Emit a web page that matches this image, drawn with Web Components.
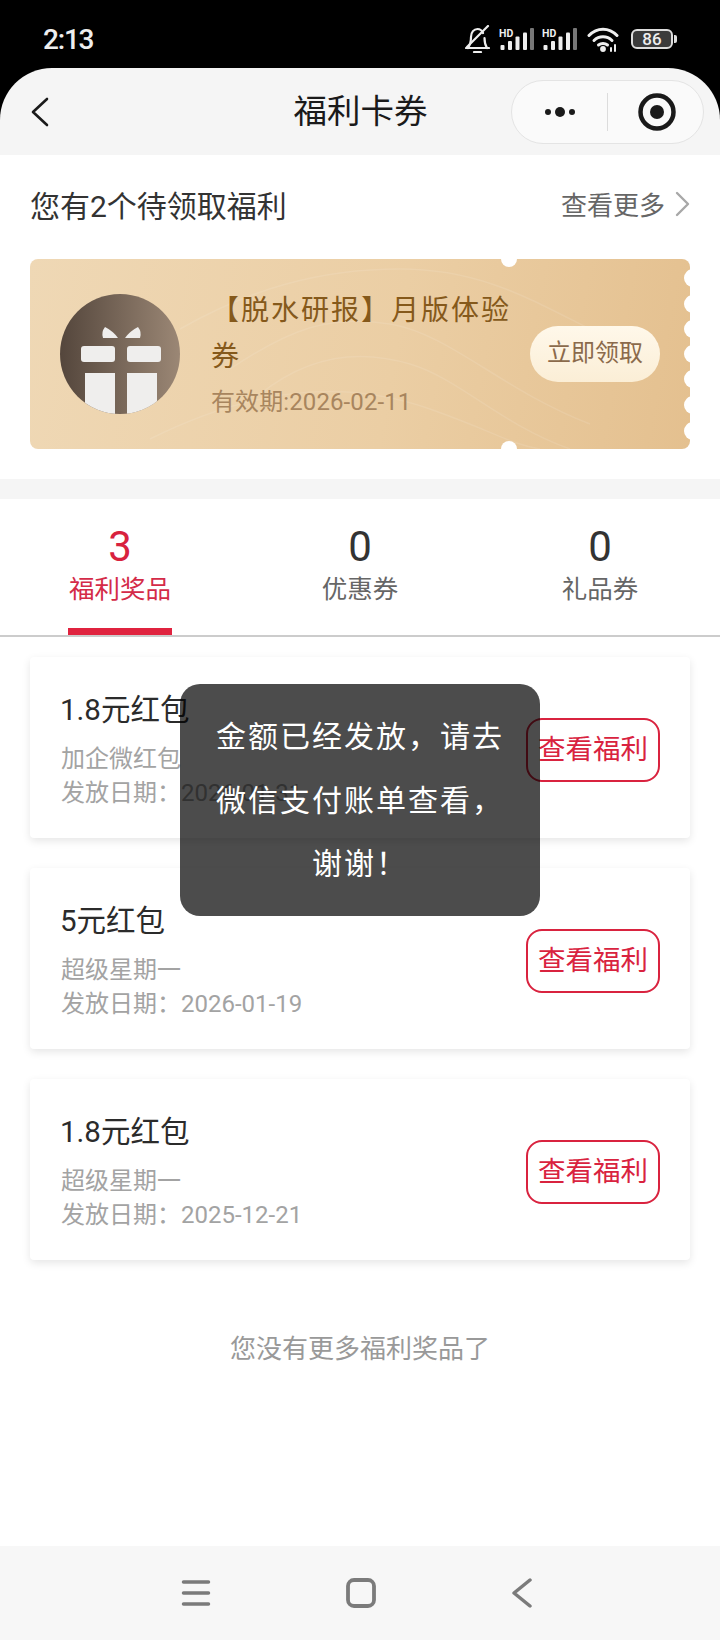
<!DOCTYPE html>
<html lang="zh">
<head>
<meta charset="utf-8">
<title>福利卡券</title>
<style>
  html, body { margin: 0; padding: 0; background: #000; }
  body {
    width: 720px;
    height: 1640px;
    overflow: hidden;
    font-family: Roboto, "Noto Sans CJK SC", sans-serif;
  }
</style>
</head>
<body>
<welfare-page>
  <status-bar slot="status" time="2:13" battery="86"></status-bar>
  <nav-bar slot="nav" title="福利卡券"></nav-bar>
  <pending-section slot="pending" heading="您有2个待领取福利" more="查看更多">
    <coupon-ticket name="【脱水研报】月版体验券" expire="有效期:2026-02-11" action="立即领取"></coupon-ticket>
  </pending-section>
  <tab-bar slot="tabs">
    <tab-item count="3" label="福利奖品" active></tab-item>
    <tab-item count="0" label="优惠券"></tab-item>
    <tab-item count="0" label="礼品券"></tab-item>
  </tab-bar>
  <prize-list slot="list" end="您没有更多福利奖品了">
    <prize-card name="1.8元红包" source="加企微红包" date="发放日期：2026-01-31" action="查看福利"></prize-card>
    <prize-card name="5元红包" source="超级星期一" date="发放日期：2026-01-19" action="查看福利"></prize-card>
    <prize-card name="1.8元红包" source="超级星期一" date="发放日期：2025-12-21" action="查看福利"></prize-card>
  </prize-list>
  <system-nav slot="system"></system-nav>
  <toast-message slot="toast">金额已经发放，请去微信支付账单查看，谢谢！</toast-message>
</welfare-page>

<script>
/** Page shell: stacks the screen sections and holds the toast overlay. */
class WelfarePage extends HTMLElement {
  constructor() {
    super();
    this.attachShadow({ mode: 'open' });
  }

  connectedCallback() {
    this.shadowRoot.innerHTML = `
      <style>
        :host {
          display: flex;
          flex-direction: column;
          position: relative;
          width: 720px;
          height: 1640px;
          background: #000;
        }
        .content {
          flex: 1;
          display: flex;
          flex-direction: column;
          background: #fff;
        }
      </style>
      <slot name="status"></slot>
      <slot name="nav"></slot>
      <div class="content">
        <slot name="pending"></slot>
        <slot name="tabs"></slot>
        <slot name="list"></slot>
      </div>
      <slot name="system"></slot>
      <slot name="toast"></slot>
    `;
  }
}

/** Phone status bar: clock on the left, state icons on the right. */
class StatusBar extends HTMLElement {
  constructor() {
    super();
    this.attachShadow({ mode: 'open' });
  }

  _signal() {
    return `
      <svg class="signal" width="35" height="22" viewBox="0 0 35 22">
        <text x="0" y="9" font-family="Roboto, sans-serif" font-size="10.5" font-weight="700" fill="#eee">HD</text>
        <rect x="1.5" y="17" width="4" height="5" rx="1" fill="#eee"/>
        <rect x="9" y="13" width="4" height="9" rx="1" fill="#eee"/>
        <rect x="16.5" y="8.5" width="4" height="13.5" rx="1" fill="#eee"/>
        <rect x="24" y="4.5" width="4" height="17.5" rx="1" fill="#eee"/>
        <rect x="31" y="0" width="4" height="22" rx="1" fill="#777"/>
      </svg>`;
  }

  connectedCallback() {
    this.shadowRoot.innerHTML = `
      <style>
        :host {
          display: flex;
          align-items: center;
          justify-content: space-between;
          box-sizing: border-box;
          height: 68px;
          padding: 10px 43px 0 43px;
          background: #000;
          color: #eee;
        }
        .time {
          font: 500 28px Roboto, sans-serif;
          letter-spacing: -1.2px;
        }
        .icons {
          display: flex;
          align-items: center;
        }
        .bell { margin-right: 9px; }
        .signal + .signal { margin-left: 8px; }
        .wifi { margin-left: 10px; margin-right: 12px; }
        .battery {
          display: flex;
          align-items: center;
          justify-content: center;
          box-sizing: border-box;
          width: 42px;
          height: 20px;
          border: 2px solid #ddd;
          border-radius: 6px;
          background: #3b3b3b;
          font: 500 17px/16px Roboto, sans-serif;
          color: #eee;
        }
        .tip {
          width: 3px;
          height: 8px;
          margin-left: 1px;
          border-radius: 0 2px 2px 0;
          background: #ddd;
        }
      </style>
      <span class="time">${this.getAttribute('time')}</span>
      <div class="icons">
        <svg class="bell" width="25" height="28" viewBox="0 0 25 28" fill="none" stroke="#eee" stroke-width="2.2" stroke-linecap="round" stroke-linejoin="round">
          <path d="M1 23h23M3 23c2-3 3-6 3-11 0-5 3-8 6.500-8 2.500 0 4.500 1.500 5.500 4M19.500 13c0 4 .5 7 2.500 10"/>
          <path d="M23 1 2 22"/>
          <path d="M9 27h7"/>
        </svg>
        ${this._signal()}
        ${this._signal()}
        <svg class="wifi" width="32" height="25" viewBox="0 0 32 25" fill="none" stroke="#eee" stroke-width="3" stroke-linecap="round">
          <path d="M2 8.500C10-0 22-0 30 8.500"/>
          <path d="M7 13.500C12 8.500 20 8.500 25 13.500"/>
          <path d="M11.500 18c2.500-2 6.500-2 9 0"/>
          <circle cx="16" cy="22" r="1.400" fill="#eee"/>
          <path d="M24 24v-3M28 24v-6" stroke-width="2"/>
        </svg>
        <span class="battery">${this.getAttribute('battery')}</span>
        <span class="tip"></span>
      </div>
    `;
  }
}

/** Mini program title bar with back arrow and capsule buttons. */
class NavBar extends HTMLElement {
  constructor() {
    super();
    this.attachShadow({ mode: 'open' });
  }

  connectedCallback() {
    this.shadowRoot.innerHTML = `
      <style>
        :host {
          display: block;
          background: #000;
        }
        .bar {
          display: grid;
          grid-template-columns: 1fr auto 1fr;
          align-items: center;
          height: 87px;
          padding: 0 16px 0 31px;
          background: #f5f5f5;
          border-radius: 52px 52px 0 0;
        }
        .back { display: block; }
        h1 {
          margin: 0 0 7px -14px;
          font: 400 33.500px "Noto Sans CJK SC", sans-serif;
          color: #1a1a1a;
          white-space: nowrap;
        }
        .capsule {
          justify-self: end;
          display: flex;
          align-items: center;
          box-sizing: border-box;
          width: 193px;
          height: 64px;
          border: 1px solid #e4e4e4;
          border-radius: 32px;
          background: #fafafa;
        }
        .more {
          width: 95px;
          display: flex;
          justify-content: center;
          align-items: center;
          gap: 4px;
        }
        .more i {
          display: block;
          width: 6px;
          height: 6px;
          border-radius: 50%;
          background: #1a1a1a;
        }
        .more i:nth-child(2) { width: 10px; height: 10px; }
        .line {
          width: 1px;
          height: 38px;
          background: #dcdcdc;
        }
        .close {
          flex: 1;
          display: flex;
          justify-content: center;
          padding-left: 2px;
        }
      </style>
      <div class="bar">
        <svg class="back" width="18" height="30" viewBox="0 0 18 30" fill="none" stroke="#1a1a1a" stroke-width="2.600" stroke-linecap="round" stroke-linejoin="round">
          <path d="M16 2 2 15l14 13"/>
        </svg>
        <h1>${this.getAttribute('title')}</h1>
        <div class="capsule">
          <div class="more"><i></i><i></i><i></i></div>
          <div class="line"></div>
          <div class="close">
            <svg width="38" height="38" viewBox="0 0 38 38">
              <circle cx="19" cy="19" r="16.500" fill="none" stroke="#1a1a1a" stroke-width="4.500"/>
              <circle cx="19" cy="19" r="7" fill="#1a1a1a"/>
            </svg>
          </div>
        </div>
      </div>
    `;
  }
}

/** "Pending benefits" block: heading row and the coupon below it. */
class PendingSection extends HTMLElement {
  constructor() {
    super();
    this.attachShadow({ mode: 'open' });
  }

  connectedCallback() {
    this.shadowRoot.innerHTML = `
      <style>
        :host {
          display: block;
          padding: 0 30px 29px;
          border-bottom: 20px solid #f5f5f5;
        }
        .head {
          display: flex;
          align-items: center;
          justify-content: space-between;
          box-sizing: border-box;
          height: 104px;
          padding-bottom: 7px;
        }
        .title {
          font-size: 30px;
          color: #333;
        }
        .more {
          display: flex;
          align-items: center;
          gap: 10px;
          font-size: 26px;
          color: #666;
        }
      </style>
      <div class="head">
        <span class="title">${this.getAttribute('heading')}</span>
        <span class="more">
          ${this.getAttribute('more')}
          <svg width="15" height="26" viewBox="0 0 15 26" fill="none" stroke="#a8a8a8" stroke-width="2.400" stroke-linecap="round" stroke-linejoin="round">
            <path d="M2 2l11 11L2 24"/>
          </svg>
        </span>
      </div>
      <slot></slot>
    `;
  }
}

/** Gold coupon with punched edges, gift badge and claim button. */
class CouponTicket extends HTMLElement {
  constructor() {
    super();
    this.attachShadow({ mode: 'open' });
  }

  connectedCallback() {
    const holes = [19, 45, 70, 95, 120, 146, 172]
      .map((y) => `<i class="hole" style="top:${y - 9}px"></i>`)
      .join('');

    this.shadowRoot.innerHTML = `
      <style>
        :host {
          display: flex;
          align-items: center;
          position: relative;
          overflow: hidden;
          box-sizing: border-box;
          height: 190px;
          margin-bottom: 1px;
          padding: 0 30px;
          border-radius: 8px;
          background: linear-gradient(100deg, #efd8b5 0%, #ebcea4 55%, #e4c08f 100%);
        }
        .waves {
          position: absolute;
          left: 0;
          top: 0;
        }
        .badge {
          position: relative;
          flex: none;
          width: 120px;
          height: 120px;
        }
        .info {
          position: relative;
          flex: none;
          width: 305px;
          margin-left: 31px;
          padding-bottom: 2px;
        }
        .name {
          font-size: 28px;
          line-height: 46px;
          letter-spacing: 2px;
          color: #85591b;
        }
        .expire {
          margin-top: 6px;
          font-size: 24px;
          line-height: 32px;
          letter-spacing: .1px;
          color: #a8855e;
        }
        .action {
          position: relative;
          flex: none;
          box-sizing: border-box;
          width: 130px;
          height: 56px;
          margin-left: auto;
          border-radius: 28px;
          background: linear-gradient(180deg, #fff8ea, #fbeed6);
          text-align: center;
          font-size: 24px;
          line-height: 55px;
          color: #8b6a4b;
        }
        .notch, .hole {
          position: absolute;
          display: block;
          border-radius: 50%;
          background: #fff;
        }
        .notch {
          left: 471px;
          width: 16px;
          height: 16px;
        }
        .notch.top { top: -8px; }
        .notch.bottom { bottom: -8px; }
        .hole {
          right: -12px;
          width: 18px;
          height: 18px;
        }
      </style>
      <svg class="waves" width="660" height="190" viewBox="0 0 660 190" fill="none" stroke="#fff" stroke-opacity=".1" stroke-width="1.500">
        <path d="M150 70C220 30 290 10 370 10S500 40 560 70"/>
        <path d="M200 110C260 70 300 55 360 65S470 130 560 165"/>
        <path d="M230 135C280 95 330 90 380 105S470 165 540 190"/>
        <path d="M120 180C240 120 330 125 400 150S480 185 510 190"/>
      </svg>
      <svg class="badge" viewBox="0 0 120 120">
        <defs>
          <linearGradient id="g" x1="0" y1="0" x2="1" y2="0">
            <stop offset="0" stop-color="#54463c"/>
            <stop offset="1" stop-color="#9b8775"/>
          </linearGradient>
          <clipPath id="c"><circle cx="60" cy="60" r="60"/></clipPath>
        </defs>
        <circle cx="60" cy="60" r="60" fill="url(#g)"/>
        <g clip-path="url(#c)" fill="#efeeed">
          <path d="M45 33Q53 37 58 44H43Q41 38 45 33z"/>
          <path d="M78 33Q70 37 65 44H80Q82 38 78 33z"/>
          <rect x="21" y="52" width="34" height="16" rx="3"/>
          <rect x="67" y="52" width="34" height="16" rx="3"/>
          <rect x="25" y="79" width="30" height="41"/>
          <rect x="67" y="79" width="30" height="41"/>
        </g>
      </svg>
      <div class="info">
        <div class="name">${this.getAttribute('name')}</div>
        <div class="expire">${this.getAttribute('expire')}</div>
      </div>
      <div class="action">${this.getAttribute('action')}</div>
      <i class="notch top"></i>
      <i class="notch bottom"></i>
      ${holes}
    `;
  }
}

/** Row of three counters, with a grey rule along the bottom. */
class TabBar extends HTMLElement {
  constructor() {
    super();
    this.attachShadow({ mode: 'open' });
  }

  connectedCallback() {
    this.shadowRoot.innerHTML = `
      <style>
        :host {
          display: grid;
          grid-template-columns: repeat(3, 1fr);
          border-bottom: 2px solid #ccc;
        }
      </style>
      <slot></slot>
    `;
  }
}

/** One counter: number over label, underlined when active. */
class TabItem extends HTMLElement {
  constructor() {
    super();
    this.attachShadow({ mode: 'open' });
  }

  connectedCallback() {
    const active = this.hasAttribute('active');
    this.shadowRoot.innerHTML = `
      <style>
        :host {
          display: flex;
          flex-direction: column;
          align-items: center;
          box-sizing: border-box;
          height: 136px;
          padding-top: 24px;
          color: ${active ? '#d8223e' : '#333'};
        }
        .count {
          font: 400 42px/48px Roboto, sans-serif;
        }
        .label {
          font-size: 25.500px;
          line-height: 36px;
          color: ${active ? '#d42b48' : '#666'};
        }
        .mark {
          width: 104px;
          height: 7px;
          margin-top: auto;
          background: ${active ? '#e0233f' : 'transparent'};
        }
      </style>
      <span class="count">${this.getAttribute('count')}</span>
      <span class="label">${this.getAttribute('label')}</span>
      <span class="mark"></span>
    `;
  }
}

/** Vertical list of prize cards with the end-of-list note. */
class PrizeList extends HTMLElement {
  constructor() {
    super();
    this.attachShadow({ mode: 'open' });
  }

  connectedCallback() {
    this.shadowRoot.innerHTML = `
      <style>
        :host {
          display: flex;
          flex-direction: column;
          gap: 30px;
          padding: 20px 30px 0;
        }
        .end {
          margin-top: 41px;
          text-align: center;
          font-size: 26px;
          line-height: 36px;
          color: #999;
        }
      </style>
      <slot></slot>
      <div class="end">${this.getAttribute('end')}</div>
    `;
  }
}

/** A single prize: name, source, date and an outlined action button. */
class PrizeCard extends HTMLElement {
  constructor() {
    super();
    this.attachShadow({ mode: 'open' });
  }

  connectedCallback() {
    this.shadowRoot.innerHTML = `
      <style>
        :host {
          display: flex;
          align-items: center;
          justify-content: space-between;
          box-sizing: border-box;
          height: 181px;
          padding: 0 30px 0 31px;
          border-radius: 4px;
          background: #fff;
          box-shadow: 0 3px 8px rgba(0, 0, 0, .1);
        }
        .text { padding-top: 4px; }
        .name {
          margin-left: -1px;
          font-size: 29.500px;
          line-height: 40px;
          color: #2b2b2b;
        }
        .meta {
          margin-top: 12px;
          font-size: 24px;
          line-height: 34px;
          color: #a3a3a3;
        }
        .action {
          box-sizing: border-box;
          width: 134px;
          height: 64px;
          margin-top: 4px;
          border: 2px solid #d9233f;
          border-radius: 16px;
          text-align: center;
          font-size: 27.500px;
          line-height: 60px;
          color: #d9233f;
        }
      </style>
      <div class="text">
        <div class="name">${this.getAttribute('name')}</div>
        <div class="meta">${this.getAttribute('source')}<br>${this.getAttribute('date')}</div>
      </div>
      <div class="action">${this.getAttribute('action')}</div>
    `;
  }
}

/** Android three-button navigation. */
class SystemNav extends HTMLElement {
  constructor() {
    super();
    this.attachShadow({ mode: 'open' });
  }

  connectedCallback() {
    this.shadowRoot.innerHTML = `
      <style>
        :host {
          display: flex;
          align-items: center;
          box-sizing: border-box;
          height: 94px;
          padding: 0 0 0 181px;
          gap: 135px;
          background: #f7f7f7;
        }
        svg { display: block; }
      </style>
      <svg width="30" height="30" viewBox="0 0 30 30" fill="none" stroke="#7b7b7b" stroke-width="3.500" stroke-linecap="round">
        <path d="M2.500 4h25M2.500 15h25M2.500 26h25"/>
      </svg>
      <svg width="30" height="30" viewBox="0 0 30 30" fill="none" stroke="#7b7b7b" stroke-width="3.800">
        <rect x="2" y="2" width="26" height="26" rx="6"/>
      </svg>
      <svg width="22" height="30" viewBox="0 0 22 30" fill="none" stroke="#7b7b7b" stroke-width="3.500" stroke-linecap="round" stroke-linejoin="round">
        <path d="M19 2 3 15l16 13"/>
      </svg>
    `;
  }
}

/** Translucent message box floating over the list. */
class ToastMessage extends HTMLElement {
  constructor() {
    super();
    this.attachShadow({ mode: 'open' });
  }

  connectedCallback() {
    this.shadowRoot.innerHTML = `
      <style>
        :host {
          position: absolute;
          left: 180px;
          top: 684px;
          box-sizing: border-box;
          width: 360px;
          height: 232px;
          padding: 21px 36px;
          border-radius: 20px;
          background: rgba(0, 0, 0, .7);
          color: #fff;
          text-align: center;
          font-size: 30px;
          line-height: 63.500px;
          letter-spacing: 2px;
        }
      </style>
      <slot></slot>
    `;
  }
}

customElements.define('welfare-page', WelfarePage);
customElements.define('status-bar', StatusBar);
customElements.define('nav-bar', NavBar);
customElements.define('pending-section', PendingSection);
customElements.define('coupon-ticket', CouponTicket);
customElements.define('tab-bar', TabBar);
customElements.define('tab-item', TabItem);
customElements.define('prize-list', PrizeList);
customElements.define('prize-card', PrizeCard);
customElements.define('system-nav', SystemNav);
customElements.define('toast-message', ToastMessage);
</script>
</body>
</html>
